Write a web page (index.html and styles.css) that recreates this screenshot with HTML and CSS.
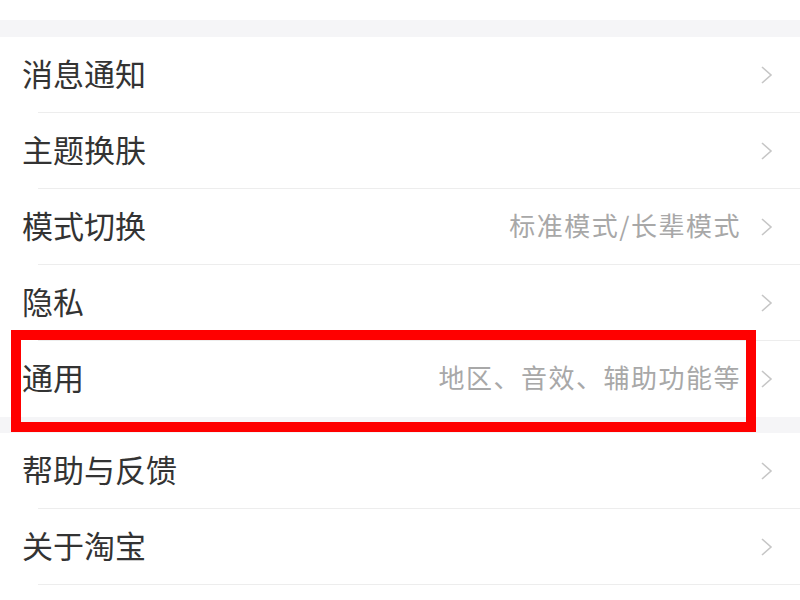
FILE: index.html
```html
<!DOCTYPE html>
<html lang="zh-CN">
<head>
  <meta charset="UTF-8">
  <title>设置</title>
  <meta name="viewport" content="width=device-width, initial-scale=1.0">
  <link rel="stylesheet" href="styles.css">
</head>
<body>

  <div class="top"></div>
  <div class="gap"></div>

  <ul class="group">
    <li class="item"><span class="label">消息通知</span><span class="arrow"><svg width="12" height="18" viewBox="0 0 12 18"><polyline points="1,1 10,9 1,17"/></svg></span></li>
    <li class="item"><span class="label">主题换肤</span><span class="arrow"><svg width="12" height="18" viewBox="0 0 12 18"><polyline points="1,1 10,9 1,17"/></svg></span></li>
    <li class="item"><span class="label">模式切换</span><span class="desc">标准模式/长辈模式</span><span class="arrow"><svg width="12" height="18" viewBox="0 0 12 18"><polyline points="1,1 10,9 1,17"/></svg></span></li>
    <li class="item"><span class="label">隐私</span><span class="arrow"><svg width="12" height="18" viewBox="0 0 12 18"><polyline points="1,1 10,9 1,17"/></svg></span></li>
    <li class="item last"><span class="label">通用</span><span class="desc">地区、音效、辅助功能等</span><span class="arrow"><svg width="12" height="18" viewBox="0 0 12 18"><polyline points="1,1 10,9 1,17"/></svg></span></li>
  </ul>

  <div class="gap gap-mid"></div>

  <ul class="group">
    <li class="item"><span class="label">帮助与反馈</span><span class="arrow"><svg width="12" height="18" viewBox="0 0 12 18"><polyline points="1,1 10,9 1,17"/></svg></span></li>
    <li class="item"><span class="label">关于淘宝</span><span class="arrow"><svg width="12" height="18" viewBox="0 0 12 18"><polyline points="1,1 10,9 1,17"/></svg></span></li>
  </ul>

  <!-- highlight drawn over the 通用 row -->
  <div class="highlight"></div>

</body>
</html>
```

FILE: styles.css
```css
body {
  margin: 0;
  background: #fff;
  color: #333;
  font-family: "Noto Sans CJK SC", "Noto Sans", sans-serif;
  position: relative;
  height: 600px;
  overflow: hidden;
}
.top {
  height: 20px;
  background: #fff;
}
.gap {
  height: 17px;
  background: #f5f5f7;
}
.gap-mid {
  height: 16px;
}
.group {
  list-style: none;
  margin: 0;
  padding: 0;
}
.item {
  position: relative;
  display: flex;
  align-items: center;
  box-sizing: border-box;
  height: 76px;
  padding: 0 27px 5px 22px;
  border-bottom: 1px solid transparent;
}
.item::after {
  content: "";
  position: absolute;
  left: 38px;
  right: 0;
  bottom: -1px;
  height: 1px;
  background: #ededed;
}
.item.last {
  border-bottom: 0;
}
.item.last::after {
  display: none;
}
.item .arrow {
  margin-top: 5px;
}
.label {
  flex: 1;
  font-size: 31px;
  color: #333;
}
.desc {
  font-size: 26px;
  letter-spacing: 1.5px;
  color: #a8a8a8;
  margin-right: 20px;
}
.arrow {
  display: flex;
}
.arrow polyline {
  fill: none;
  stroke: #c6c6c6;
  stroke-width: 1.6;
}
.highlight {
  position: absolute;
  left: 11px;
  top: 330px;
  width: 725px;
  height: 82px;
  border: 10px solid #ff0000;
}
```
